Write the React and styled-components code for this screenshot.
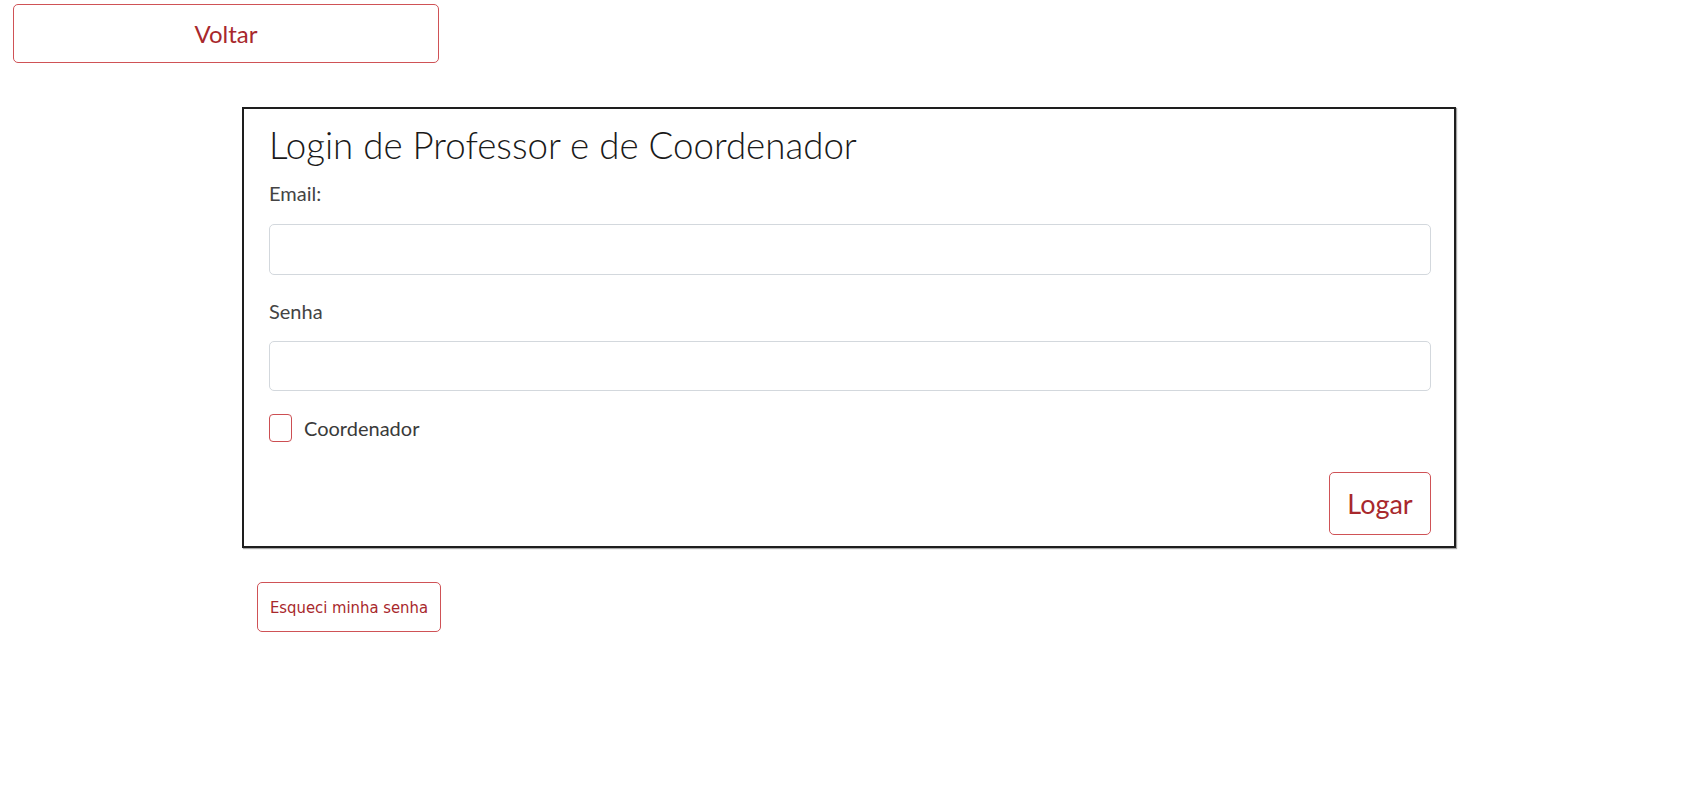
import React from "react";
import styled, { createGlobalStyle } from "styled-components";

const Global = createGlobalStyle`
  html, body { margin: 0; padding: 0; background: #fff; }
  body { font-family: Lato, "Open Sans", sans-serif; }
  * { box-sizing: border-box; }
`;

const Page = styled.div`
  padding: 4px 13px 40px;
  width: 1700px;
`;

const OutlineButton = styled.button`
  display: inline-flex;
  align-items: center;
  justify-content: center;
  background: #fff;
  color: #a8282c;
  border: 1.5px solid #cf5256;
  border-radius: 5px;
  font-family: ${(p) =>
    p.$narrow
      ? '"Liberation Sans Narrow", "DejaVu Sans Condensed", "Liberation Sans", sans-serif'
      : "Lato, sans-serif"};
  font-size: ${(p) => p.$size}px;
  width: ${(p) => p.$w}px;
  height: ${(p) => p.$h}px;
  padding: 0;
  cursor: pointer;
`;

const Card = styled.div`
  width: 1214px;
  margin: 44px 0 0 229px;
  border: 2px solid #1e1e1e;
  box-shadow: 1px 1px 1px rgba(0, 0, 0, 0.35);
  padding: 12px 23px 11px 25px;
  display: flex;
  flex-direction: column;
`;

const Title = styled.h1`
  margin: 0;
  font-family: Lato, sans-serif;
  font-weight: 300;
  font-size: 36.7px;
  line-height: 48px;
  color: #1a1a1a;
`;

const Label = styled.label`
  display: block;
  font-family: Lato, sans-serif;
  font-size: 20px;
  color: #444;
  line-height: 24px;
  margin-top: ${(p) => p.$mt}px;
`;

const Input = styled.input`
  display: block;
  width: 100%;
  height: ${(p) => p.$h}px;
  margin-top: ${(p) => p.$mt}px;
  border: 1.5px solid #d3d8dd;
  border-radius: 5px;
  background: #fff;
  font-size: 18px;
  padding: 0 12px;
  outline: none;
`;

const CheckRow = styled.label`
  display: flex;
  align-items: center;
  gap: 12px;
  margin-top: 23px;
  font-family: Lato, sans-serif;
  font-size: 20px;
  color: #3a3a3a;
  cursor: pointer;
`;

const CheckBox = styled.span`
  width: 23px;
  height: 28px;
  border: 1.5px solid #cc4e52;
  border-radius: 4px;
  background: #fff;
  flex: none;
`;

const Actions = styled.div`
  display: flex;
  justify-content: flex-end;
  margin-top: 30px;
`;

const Below = styled.div`
  margin: 34px 0 0 244px;
`;

export default function App() {
  return (
    <Page>
      <Global />
      <OutlineButton $w={426} $h={59} $size={24}>Voltar</OutlineButton>
      <Card>
        <Title>Login de Professor e de Coordenador</Title>
        <Label $mt={12}>Email:</Label>
        <Input $h={51} $mt={19} type="email" />
        <Label $mt={24}>Senha</Label>
        <Input $h={50} $mt={18} type="password" />
        <CheckRow>
          <CheckBox />
          Coordenador
        </CheckRow>
        <Actions>
          <OutlineButton $w={102} $h={63} $size={27}>Logar</OutlineButton>
        </Actions>
      </Card>
      <Below>
        <OutlineButton $w={184} $h={50} $size={16.5} $narrow>Esqueci minha senha</OutlineButton>
      </Below>
    </Page>
  );
}
